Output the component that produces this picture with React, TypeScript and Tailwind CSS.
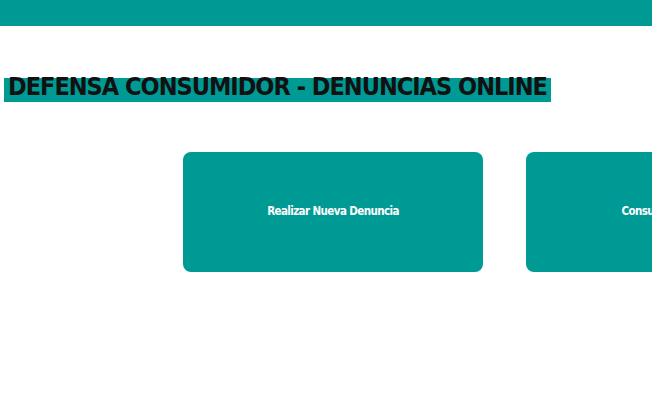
export default function App() {
  const opciones = ["Realizar Nueva Denuncia", "Consultar Denuncias"]

  return (
    <div className="w-[652px] h-[408px] overflow-hidden bg-white font-['DejaVu_Sans_Condensed','DejaVu_Sans',sans-serif]">
      {/* Barra superior */}
      <header className="h-[26px] bg-[#009a94]" />

      {/* Título */}
      <div className="pt-[45px] pl-[4px]">
        <h1 className="inline-block whitespace-nowrap px-[4px] leading-[31px] text-[25px] font-bold tracking-[-1px] text-[#111] bg-[linear-gradient(transparent_23%,#009a94_23%)]">
          DEFENSA CONSUMIDOR - DENUNCIAS ONLINE
        </h1>
      </div>

      {/* Opciones */}
      <div className="flex gap-[43px] pl-[183px] pt-[50px]">
        {opciones.map((op) => (
          <a
            key={op}
            href="#"
            className="shrink-0 w-[300px] h-[120px] rounded-[8px] bg-[#009a94] flex items-center justify-center whitespace-nowrap text-white text-[11.5px] font-bold tracking-[-0.6px]"
          >
            {op}
          </a>
        ))}
      </div>
    </div>
  )
}
